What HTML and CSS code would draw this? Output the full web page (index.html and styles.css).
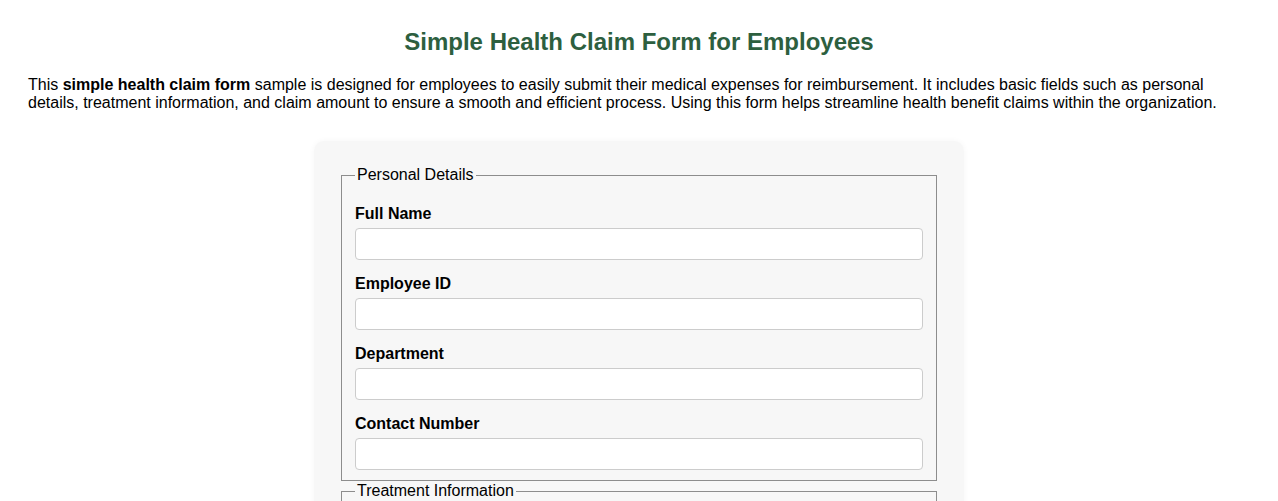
FILE: index.html
```html
<!DOCTYPE html>
<html lang="en">
<head>
  <meta charset="UTF-8">
  <meta name="viewport" content="width=device-width, initial-scale=1.0">
  <title>Simple Health Claim Form for Employees</title>
  <link rel="stylesheet" href="styles.css">
</head>
<body>
  <div class="page">
    <h1>Simple Health Claim Form for Employees</h1>
    <p class="intro">This <strong>simple health claim form</strong> sample is designed for employees to easily submit their medical expenses for reimbursement. It includes basic fields such as personal details, treatment information, and claim amount to ensure a smooth and efficient process. Using this form helps streamline health benefit claims within the organization.</p>

    <form class="claim-form">
      <fieldset>
        <legend>Personal Details</legend>
        <label for="fullName">Full Name</label>
        <input type="text" id="fullName">
        <label for="employeeId">Employee ID</label>
        <input type="text" id="employeeId">
        <label for="department">Department</label>
        <input type="text" id="department">
        <label for="contact">Contact Number</label>
        <input type="text" id="contact">
      </fieldset>

      <fieldset>
        <legend>Treatment Information</legend>
        <label for="treatDate">Date of Treatment</label>
        <input type="date" id="treatDate">
        <label for="hospital">Hospital / Clinic Name</label>
        <input type="text" id="hospital">
        <label for="treatment">Treatment Details</label>
        <input type="text" id="treatment">
      </fieldset>
    </form>
  </div>
</body>
</html>
```

FILE: styles.css
```css
/* base */
body {
  margin: 0;
  font-family: Arial, "Liberation Sans", sans-serif;
  font-size: 16px;
  color: #000;
  background-color: #fff;
}

.page {
  padding: 28px 28px;
}

h1 {
  font-size: 24px;
  color: #2d5f3f;
  text-align: center;
  margin: 0 0 20px 0;
}

.intro {
  margin: 0;
}

/* form box */
.claim-form {
  max-width: 600px;
  margin: 29px auto 0;
  padding: 25px;
  background-color: #f7f7f7;
  border-radius: 10px;
  box-shadow: 0 0 6px rgba(0, 0, 0, 0.04);
}

fieldset {
  margin: 0 2px 1px;
  padding: 6px 13px 10px;
  border: 1px solid #8d8d8d;
}

legend {
  padding: 0 2px;
}

label {
  display: block;
  font-weight: bold;
  line-height: 18px;
  margin: 15px 0 5px;
}

input[type="text"],
input[type="date"] {
  display: block;
  box-sizing: border-box;
  width: 100%;
  height: 32px;
  padding: 6px 8px;
  font-size: 14px;
  font-family: Arial, "Liberation Sans", sans-serif;
  background-color: #fff;
  border: 1px solid #ccc;
  border-radius: 4px;
}
```
